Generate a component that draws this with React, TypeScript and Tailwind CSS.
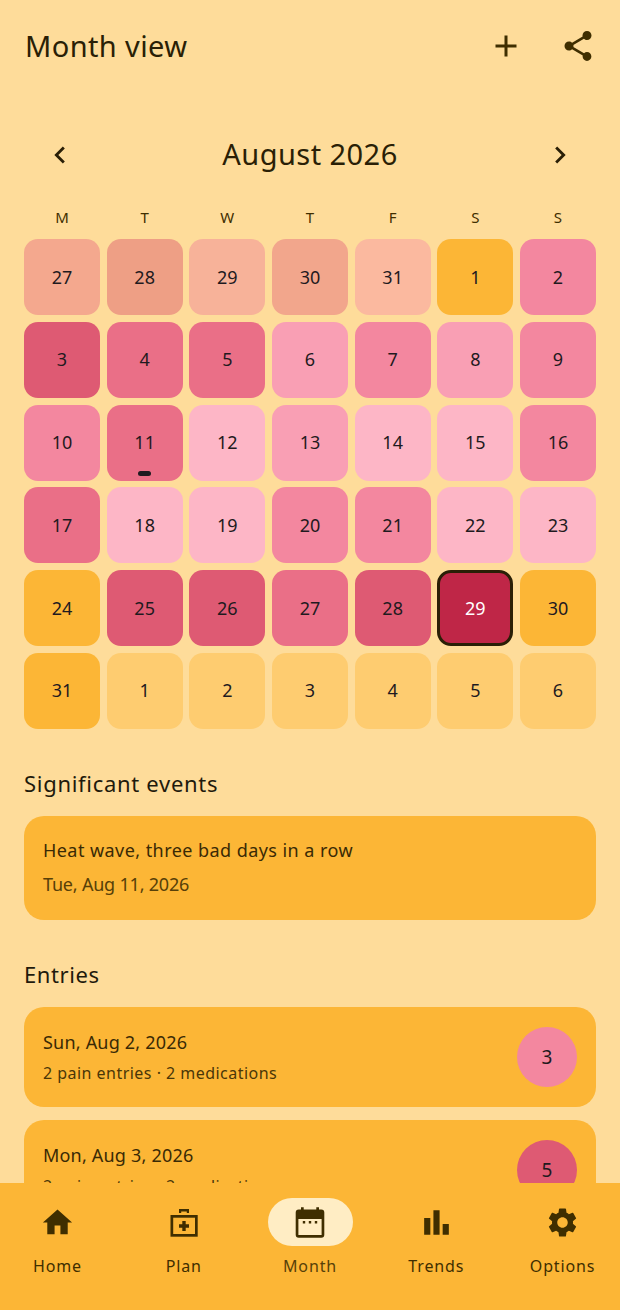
import { MdAdd, MdShare, MdChevronLeft, MdChevronRight, MdHome, MdBarChart, MdSettings } from "react-icons/md";

const P0 = "bg-[#FDB6C6]";
const P1 = "bg-[#F99FB4]";
const P2 = "bg-[#F3879F]";
const P3 = "bg-[#EA6F87]";
const P4 = "bg-[#DE5A73]";
const AM = "bg-[#FCB636]";
const OUT = "bg-[#FECC70]";

const days: { n: number; bg: string; note?: boolean; today?: boolean }[] = [
  { n: 27, bg: "bg-[#F4A88E]" },
  { n: 28, bg: "bg-[#EE9F85]" },
  { n: 29, bg: "bg-[#F7B299]" },
  { n: 30, bg: "bg-[#F2A68C]" },
  { n: 31, bg: "bg-[#FBB99F]" },
  { n: 1, bg: AM },
  { n: 2, bg: P2 },
  { n: 3, bg: P4 },
  { n: 4, bg: P3 },
  { n: 5, bg: P3 },
  { n: 6, bg: P1 },
  { n: 7, bg: P2 },
  { n: 8, bg: P1 },
  { n: 9, bg: P2 },
  { n: 10, bg: P2 },
  { n: 11, bg: P3, note: true },
  { n: 12, bg: P0 },
  { n: 13, bg: P1 },
  { n: 14, bg: P0 },
  { n: 15, bg: P0 },
  { n: 16, bg: P2 },
  { n: 17, bg: P3 },
  { n: 18, bg: P0 },
  { n: 19, bg: P0 },
  { n: 20, bg: P2 },
  { n: 21, bg: P2 },
  { n: 22, bg: P0 },
  { n: 23, bg: P0 },
  { n: 24, bg: AM },
  { n: 25, bg: P4 },
  { n: 26, bg: P4 },
  { n: 27, bg: P3 },
  { n: 28, bg: P4 },
  { n: 29, bg: "bg-[#BF2647]", today: true },
  { n: 30, bg: AM },
  { n: 31, bg: AM },
  { n: 1, bg: OUT },
  { n: 2, bg: OUT },
  { n: 3, bg: OUT },
  { n: 4, bg: OUT },
  { n: 5, bg: OUT },
  { n: 6, bg: OUT },
];

const weekdays = ["M", "T", "W", "T", "F", "S", "S"];

function PlanIcon() {
  return (
    <svg width="32" height="32" viewBox="0 0 32 32" fill="#3F2E00">
      <path d="M11 3h10v4h-2.2V5.6h-5.6V7H11z" />
      <rect x="3.85" y="10.35" width="24.5" height="19" fill="none" stroke="#3F2E00" strokeWidth="2.7" />
      <path d="M14.3 15h3.4v3.3H21v3.4h-3.3V25h-3.4v-3.3H11v-3.4h3.3z" />
    </svg>
  );
}

function CalendarIcon() {
  return (
    <svg width="32" height="32" viewBox="0 0 32 32">
      <path
        fill="#3F2E00"
        d="M7 1.3h2.7v2.2h12.6V1.3H25v2.2h2.3a3 3 0 0 1 3 3v22.2a3 3 0 0 1-3 3H4.7a3 3 0 0 1-3-3V6.5a3 3 0 0 1 3-3H7z"
      />
      <rect x="4.4" y="13" width="23.2" height="16" fill="#FFEDC4" />
      <path fill="#3F2E00" d="M8.8 15h2.4v2.4H8.8zM14.8 15h2.4v2.4h-2.4zM20.8 15h2.4v2.4h-2.4z" />
    </svg>
  );
}

const nav = [
  { label: "Home", icon: <MdHome size={35} className="text-[#3F2E00]" /> },
  { label: "Plan", icon: <PlanIcon /> },
  { label: "Month", icon: <CalendarIcon />, active: true },
  { label: "Trends", icon: <MdBarChart size={37} className="text-[#3F2E00]" /> },
  { label: "Options", icon: <MdSettings size={35} className="text-[#3F2E00]" /> },
];

function EntryCard({ date, detail, level, bg }: { date: string; detail: string; level: number; bg: string }) {
  return (
    <div className="flex h-[100px] items-center justify-between rounded-[20px] bg-[#FCB636] px-[19px]">
      <div className="pb-[2px]">
        <div className="text-[18px] leading-[28px] tracking-[0.2px] text-[#3A2A05]">{date}</div>
        <div className="mt-[6px] text-[16px] leading-[22px] tracking-[0.47px] text-[#4A3608]">{detail}</div>
      </div>
      <div className={`flex h-[60px] w-[60px] items-center justify-center rounded-full text-[19px] text-[#1F1A20] ${bg}`}>
        {level}
      </div>
    </div>
  );
}

export default function App() {
  return (
    <div className="relative h-[1310px] w-[620px] overflow-hidden bg-[#FEDC9A] font-['Noto_Sans',sans-serif] text-[#1F1A0C]">
      <header className="flex h-[92px] items-center justify-between pl-[25px] pr-[24px]">
        <h1 className="text-[29px] tracking-[0.4px] text-[#2A1F06]">Month view</h1>
        <div className="flex items-center gap-[36px] text-[#3F2E00]">
          <MdAdd size={36} />
          <MdShare size={36} />
        </div>
      </header>

      <div className="mt-[36px] flex h-[52px] items-center justify-between px-[43px]">
        <MdChevronLeft size={34} className="mt-[2px] text-[#2A1F06]" />
        <div className="text-[29px] tracking-[0.45px] text-[#2A1F06]">August 2026</div>
        <MdChevronRight size={34} className="mt-[2px] text-[#2A1F06]" />
      </div>

      <div className="mt-[26px] grid grid-cols-7 gap-x-[6.67px] px-[24px] text-center text-[15px] leading-[22px] text-[#3F2E00]">
        {weekdays.map((d, i) => (
          <div key={i}>{d}</div>
        ))}
      </div>

      <div className="mt-[11px] grid grid-cols-7 gap-x-[6.67px] gap-y-[6.8px] px-[24px]">
        {days.map((d, i) => (
          <div
            key={i}
            className={`relative flex h-[76px] items-center justify-center rounded-[14px] text-[18px] ${d.bg} ${d.today ? "border-[3px] border-[#2A1F06] text-white" : "text-[#1F1A20]"}`}
          >
            {d.n}
            {d.note && <div className="absolute bottom-[5px] h-[5px] w-[13px] rounded-full bg-[#1F1A20]" />}
          </div>
        ))}
      </div>

      <h2 className="mt-[37px] pl-[24px] text-[22px] leading-[34px] tracking-[0.7px] text-[#1F1A0C]">Significant events</h2>
      <div className="mx-[24px] mt-[16px] h-[104px] rounded-[20px] bg-[#FCB636] px-[19px] pt-[19px]">
        <div className="text-[18px] leading-[30px] tracking-[0.44px] text-[#3A2A05]">Heat wave, three bad days in a row</div>
        <div className="mt-[4px] text-[18px] leading-[30px] tracking-[-0.2px] text-[#574008]">Tue, Aug 11, 2026</div>
      </div>

      <h2 className="mt-[37px] pl-[24px] text-[22px] leading-[34px] tracking-[0.6px] text-[#1F1A0C]">Entries</h2>
      <div className="mx-[24px] mt-[16px] flex flex-col gap-[13px]">
        <EntryCard date="Sun, Aug 2, 2026" detail="2 pain entries · 2 medications" level={3} bg={P2} />
        <EntryCard date="Mon, Aug 3, 2026" detail="2 pain entries · 2 medications" level={5} bg={P4} />
      </div>

      <nav className="absolute inset-x-0 bottom-0 flex h-[127px] justify-between bg-[#FCB636] px-[15px] pt-[15px]">
        {nav.map(({ label, icon, active }) => (
          <div key={label} className="flex w-[85px] flex-col items-center">
            <div className={`flex h-[48px] w-[85px] items-center justify-center rounded-full ${active ? "bg-[#FFEDC4]" : ""}`}>
              {icon}
            </div>
            <div className={`mt-[8px] text-[16px] leading-[24px] tracking-[0.85px] ${active ? "text-[#574008]" : "text-[#3F2E00]"}`}>
              {label}
            </div>
          </div>
        ))}
      </nav>
    </div>
  );
}
